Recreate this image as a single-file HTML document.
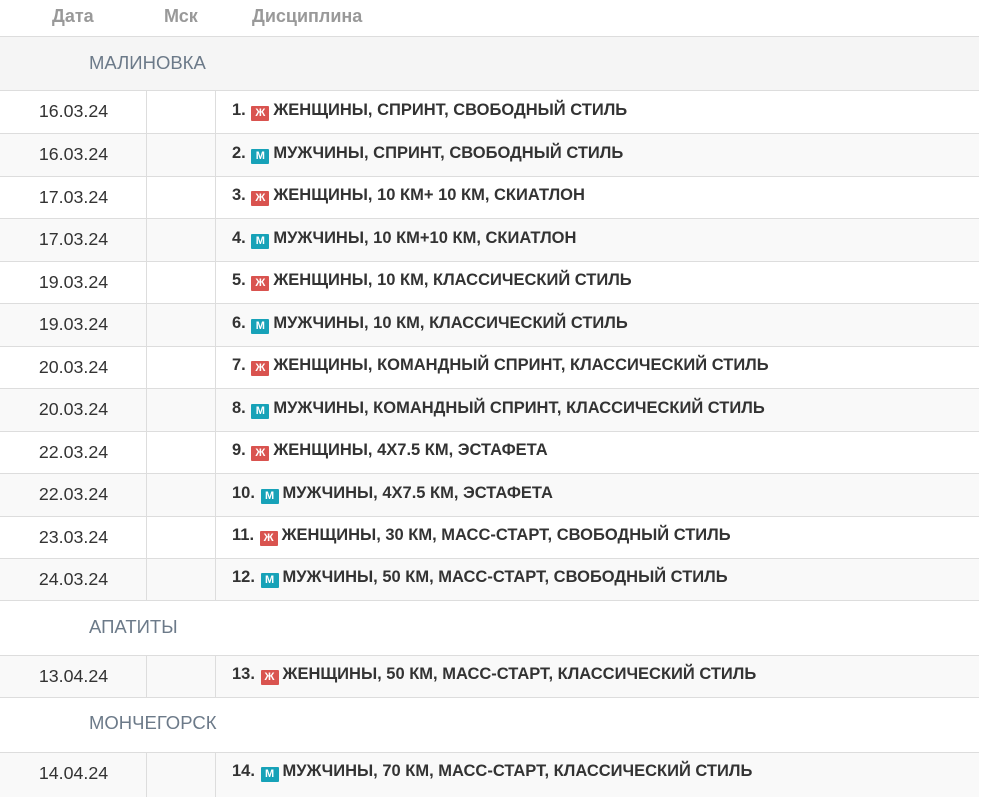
<!DOCTYPE html>
<html><head><meta charset="utf-8"><style>
*{margin:0;padding:0;box-sizing:border-box}
body{width:984px;height:791px;overflow:hidden;background:#fff;font-family:"Liberation Sans",Arial,sans-serif;position:relative}
.h{position:absolute;top:6px;font-size:18px;font-weight:bold;color:#999}
.r{position:absolute;left:0;width:979px;border-top:1px solid #ddd}
.g{background:#f9f9f9}
.sec{background:#f5f5f5}
.c1,.c2{position:absolute;top:0;bottom:0;border-right:1px solid #ddd}
.c1{left:0;width:147px}.c2{left:147px;width:69px}
.d{position:absolute;left:0;width:147px;text-align:center;font-size:17.8px;color:#333}
.t{position:absolute;left:232px;font-size:16.5px;font-weight:bold;color:#333;white-space:nowrap}
.b{display:inline-block;width:18px;height:15px;line-height:15px;text-align:center;color:#fff;font-size:11px;font-weight:bold;vertical-align:-1px;border-radius:1px;margin:0 4px 0 1px}
.f{background:#d9534f}.m{background:#17a2b8}
.s{position:absolute;left:89px;font-size:18.5px;color:#6c7a89}
</style></head><body>
<div class="h" style="left:52px">Дата</div>
<div class="h" style="left:164px">Мск</div>
<div class="h" style="left:252px">Дисциплина</div>

<div class="r sec" style="top:36px;height:54px"><div class="s" style="top:15px">МАЛИНОВКА</div></div>

<div class="r" style="top:90px;height:43px"><div class="c1"></div><div class="c2"></div><div class="d" style="top:10px">16.03.24</div><div class="t" style="top:10px">1. <span class="b f">Ж</span>ЖЕНЩИНЫ, СПРИНТ, СВОБОДНЫЙ СТИЛЬ</div></div>
<div class="r g" style="top:133px;height:43px"><div class="c1"></div><div class="c2"></div><div class="d" style="top:10px">16.03.24</div><div class="t" style="top:10px">2. <span class="b m">М</span>МУЖЧИНЫ, СПРИНТ, СВОБОДНЫЙ СТИЛЬ</div></div>
<div class="r" style="top:176px;height:42px"><div class="c1"></div><div class="c2"></div><div class="d" style="top:10px">17.03.24</div><div class="t" style="top:9px">3. <span class="b f">Ж</span>ЖЕНЩИНЫ, 10 КМ+ 10 КМ, СКИАТЛОН</div></div>
<div class="r g" style="top:218px;height:43px"><div class="c1"></div><div class="c2"></div><div class="d" style="top:10px">17.03.24</div><div class="t" style="top:10px">4. <span class="b m">М</span>МУЖЧИНЫ, 10 КМ+10 КМ, СКИАТЛОН</div></div>
<div class="r" style="top:261px;height:42px"><div class="c1"></div><div class="c2"></div><div class="d" style="top:10px">19.03.24</div><div class="t" style="top:9px">5. <span class="b f">Ж</span>ЖЕНЩИНЫ, 10 КМ, КЛАССИЧЕСКИЙ СТИЛЬ</div></div>
<div class="r g" style="top:303px;height:43px"><div class="c1"></div><div class="c2"></div><div class="d" style="top:10px">19.03.24</div><div class="t" style="top:10px">6. <span class="b m">М</span>МУЖЧИНЫ, 10 КМ, КЛАССИЧЕСКИЙ СТИЛЬ</div></div>
<div class="r" style="top:346px;height:42px"><div class="c1"></div><div class="c2"></div><div class="d" style="top:10px">20.03.24</div><div class="t" style="top:9px">7. <span class="b f">Ж</span>ЖЕНЩИНЫ, КОМАНДНЫЙ СПРИНТ, КЛАССИЧЕСКИЙ СТИЛЬ</div></div>
<div class="r g" style="top:388px;height:43px"><div class="c1"></div><div class="c2"></div><div class="d" style="top:10px">20.03.24</div><div class="t" style="top:10px">8. <span class="b m">М</span>МУЖЧИНЫ, КОМАНДНЫЙ СПРИНТ, КЛАССИЧЕСКИЙ СТИЛЬ</div></div>
<div class="r" style="top:431px;height:42px"><div class="c1"></div><div class="c2"></div><div class="d" style="top:10px">22.03.24</div><div class="t" style="top:9px">9. <span class="b f">Ж</span>ЖЕНЩИНЫ, 4Х7.5 КМ, ЭСТАФЕТА</div></div>
<div class="r g" style="top:473px;height:43px"><div class="c1"></div><div class="c2"></div><div class="d" style="top:10px">22.03.24</div><div class="t" style="top:10px">10. <span class="b m">М</span>МУЖЧИНЫ, 4Х7.5 КМ, ЭСТАФЕТА</div></div>
<div class="r" style="top:516px;height:42px"><div class="c1"></div><div class="c2"></div><div class="d" style="top:10px">23.03.24</div><div class="t" style="top:9px">11. <span class="b f">Ж</span>ЖЕНЩИНЫ, 30 КМ, МАСС-СТАРТ, СВОБОДНЫЙ СТИЛЬ</div></div>
<div class="r g" style="top:558px;height:43px;border-bottom:1px solid #ddd"><div class="c1"></div><div class="c2"></div><div class="d" style="top:10px">24.03.24</div><div class="t" style="top:9px">12. <span class="b m">М</span>МУЖЧИНЫ, 50 КМ, МАСС-СТАРТ, СВОБОДНЫЙ СТИЛЬ</div></div>

<div class="s" style="top:616px">АПАТИТЫ</div>
<div class="r g" style="top:655px;height:43px;border-bottom:1px solid #ddd"><div class="c1"></div><div class="c2"></div><div class="d" style="top:10px">13.04.24</div><div class="t" style="top:9px">13. <span class="b f">Ж</span>ЖЕНЩИНЫ, 50 КМ, МАСС-СТАРТ, КЛАССИЧЕСКИЙ СТИЛЬ</div></div>

<div class="s" style="top:712px">МОНЧЕГОРСК</div>
<div class="r g" style="top:752px;height:45px"><div class="c1"></div><div class="c2"></div><div class="d" style="top:10px">14.04.24</div><div class="t" style="top:9px">14. <span class="b m">М</span>МУЖЧИНЫ, 70 КМ, МАСС-СТАРТ, КЛАССИЧЕСКИЙ СТИЛЬ</div></div>
</body></html>
